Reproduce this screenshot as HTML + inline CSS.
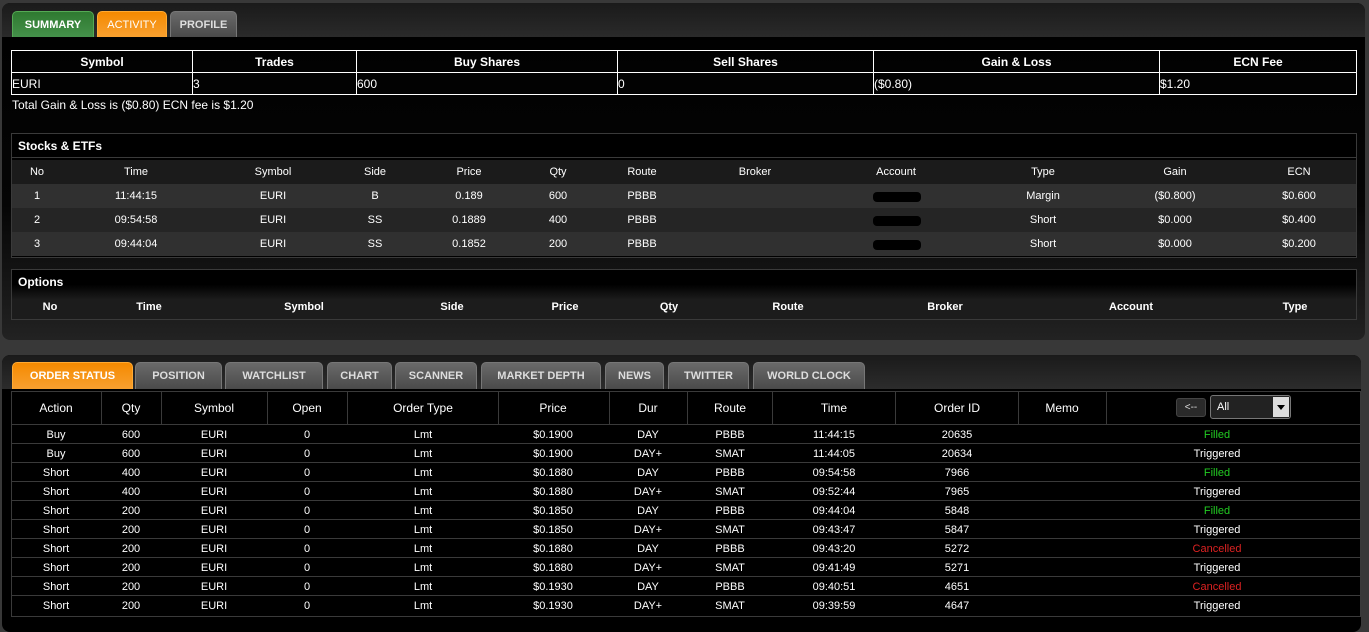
<!DOCTYPE html>
<html><head><meta charset="utf-8"><style>
*{margin:0;padding:0;box-sizing:border-box}
body{width:1369px;height:632px;background:#383838;font-family:"Liberation Sans",sans-serif;color:#fff;position:relative;overflow:hidden;font-size:11px}
.abs{position:absolute}
.panel{position:absolute;border-radius:8px;background:linear-gradient(#000 0,#050505 60%,#222 100%)}
.tab{position:absolute;height:26px;border-radius:5px 5px 0 0;font-weight:bold;font-size:11px;display:flex;align-items:center;justify-content:center;color:#ddd;background:linear-gradient(#6a6a6a,#4a4a4a);border:1px solid #777;border-bottom:none}
.tab.on{background:linear-gradient(#f58a00,#f8a030);color:#fff;border-color:#fa3}
.tab.g{background:linear-gradient(#2f7a30,#44904a);color:#fff;border-color:#5a5}
.c{position:absolute;transform:translateX(-50%);white-space:nowrap}
table{border-collapse:collapse}
</style></head><body>
<div class="panel" style="left:2px;top:3px;width:1363px;height:337px"></div>
<div class="abs" style="left:2px;top:3px;width:1363px;height:34px;border-radius:8px 8px 0 0;background:linear-gradient(#1a1a1a,#2a2a2a)"></div>
<div class="tab g" style="left:12px;top:11px;width:82px">SUMMARY</div>
<div class="tab on" style="left:97px;top:11px;width:70px;font-weight:normal">ACTIVITY</div>
<div class="tab" style="left:170px;top:11px;width:67px">PROFILE</div>
<div class="abs" style="left:2px;top:37px;width:1363px;height:3px;background:#000"></div>

<table class="abs" style="left:11px;top:50px;width:1346px;font-size:12px">
<tr style="height:22px;font-weight:bold"><td style="border:1px solid #fff;width:181px;text-align:center">Symbol</td><td style="border:1px solid #fff;width:164px;text-align:center">Trades</td><td style="border:1px solid #fff;width:261px;text-align:center">Buy Shares</td><td style="border:1px solid #fff;width:256px;text-align:center">Sell Shares</td><td style="border:1px solid #fff;width:286px;text-align:center">Gain &amp; Loss</td><td style="border:1px solid #fff;text-align:center">ECN Fee</td></tr>
<tr style="height:22px"><td style="border:1px solid #fff">EURI</td><td style="border:1px solid #fff">3</td><td style="border:1px solid #fff">600</td><td style="border:1px solid #fff">0</td><td style="border:1px solid #fff">($0.80)</td><td style="border:1px solid #fff">$1.20</td></tr>
</table>
<div class="abs" style="left:12px;top:98px;font-size:12px">Total Gain &amp; Loss is ($0.80) ECN fee is $1.20</div>

<div class="abs" style="left:11px;top:133px;width:1346px;height:125px;border:1px solid #3a3a3a;background:#000"></div>
<div class="abs" style="left:18px;top:139px;font-weight:bold;font-size:12px">Stocks &amp; ETFs</div>
<div class="abs" style="left:12px;top:157px;width:1344px;height:1px;background:#3a3a3a"></div>
<div class="abs" style="left:12px;top:160px;width:1344px;height:24px;background:#1b1b1b"></div>
<div class="abs" style="left:12px;top:184px;width:1344px;height:24px;background:#303030"></div>
<div class="abs" style="left:12px;top:208px;width:1344px;height:24px;background:#252525"></div>
<div class="abs" style="left:12px;top:232px;width:1344px;height:24px;background:#303030"></div>
<div id="st"></div>

<div class="abs" style="left:11px;top:269px;width:1346px;height:51px;border:1px solid #3a3a3a;background:linear-gradient(#000 0,#000 30%,#1c1c1c 60%,#1c1c1c)"></div>
<div class="abs" style="left:18px;top:275px;font-weight:bold;font-size:12px">Options</div>
<div id="op"></div>

<div class="panel" style="left:2px;top:355px;width:1359px;height:277px;background:#000"></div>
<div class="abs" style="left:2px;top:355px;width:1359px;height:34px;border-radius:8px 8px 0 0;background:linear-gradient(#1a1a1a,#2c2c2c)"></div>
<div class="tab on" style="left:12px;top:362px;width:121px;height:27px">ORDER STATUS</div>
<div class="tab" style="left:135px;top:362px;width:87px;height:27px">POSITION</div>
<div class="tab" style="left:225px;top:362px;width:98px;height:27px">WATCHLIST</div>
<div class="tab" style="left:327px;top:362px;width:65px;height:27px">CHART</div>
<div class="tab" style="left:395px;top:362px;width:82px;height:27px">SCANNER</div>
<div class="tab" style="left:481px;top:362px;width:120px;height:27px">MARKET DEPTH</div>
<div class="tab" style="left:605px;top:362px;width:59px;height:27px">NEWS</div>
<div class="tab" style="left:668px;top:362px;width:81px;height:27px">TWITTER</div>
<div class="tab" style="left:753px;top:362px;width:112px;height:27px">WORLD CLOCK</div>
<div class="abs" style="left:11px;top:391px;width:1350px;height:226px;border:1px solid #3a3a3a"></div>
<div id="ord"></div>
<div class="abs" style="left:1176px;top:398px;width:30px;height:19px;background:#2a2a2a;border:1px solid #444;border-radius:3px;color:#ddd;font-size:10px;text-align:center;line-height:17px">&lt;--</div>
<div class="abs" style="left:1210px;top:395px;width:81px;height:24px;background:#222;border:1px solid #777;border-radius:3px"><span style="position:absolute;left:6px;top:5px;font-size:11px">All</span><div style="position:absolute;right:1px;top:1px;width:16px;height:20px;background:#ddd"><div style="position:absolute;left:4px;top:8px;border:4px solid transparent;border-top:5px solid #000;border-bottom:none"></div></div></div>
<script>
function put(id,html){document.getElementById(id).innerHTML=html}
var h='';
var sx=[37,136,273,375,469,558,642,755,896,1043,1175,1299];
var sh=['No','Time','Symbol','Side','Price','Qty','Route','Broker','Account','Type','Gain','ECN'];
sh.forEach((t,i)=>h+='<div class="c" style="left:'+sx[i]+'px;top:166px">'+t+'</div>');
var rows=[['1','11:44:15','EURI','B','0.189','600','PBBB','','','Margin','($0.800)','$0.600'],['2','09:54:58','EURI','SS','0.1889','400','PBBB','','','Short','$0.000','$0.400'],['3','09:44:04','EURI','SS','0.1852','200','PBBB','','','Short','$0.000','$0.200']];
rows.forEach((r,j)=>{var y=190+24*j;r.forEach((t,i)=>{if(t)h+='<div class="c" style="left:'+sx[i]+'px;top:'+y+'px">'+t+'</div>'});h+='<div class="abs" style="left:873px;top:'+(y+2)+'px;width:48px;height:10px;background:#000;border-radius:4px"></div>'});
put('st',h);
h='';var ox=[50,149,304,452,565,669,788,945,1131,1295];
['No','Time','Symbol','Side','Price','Qty','Route','Broker','Account','Type'].forEach((t,i)=>h+='<div class="c" style="left:'+ox[i]+'px;top:301px;font-weight:bold">'+t+'</div>');
put('op',h);
h='';var bx=[101,161,267,347,498,609,687,772,895,1018,1106];
bx.forEach(x=>h+='<div class="abs" style="left:'+x+'px;top:392px;width:1px;height:33px;background:#3a3a3a"></div>');
var cx=[56,131,214,307,423,553,648,730,834,957,1062];
['Action','Qty','Symbol','Open','Order Type','Price','Dur','Route','Time','Order ID','Memo'].forEach((t,i)=>h+='<div class="c" style="left:'+cx[i]+'px;top:401px;font-size:12px">'+t+'</div>');
var od=[['Buy','600','$0.1900','DAY','PBBB','11:44:15','20635','Filled'],['Buy','600','$0.1900','DAY+','SMAT','11:44:05','20634','Triggered'],['Short','400','$0.1880','DAY','PBBB','09:54:58','7966','Filled'],['Short','400','$0.1880','DAY+','SMAT','09:52:44','7965','Triggered'],['Short','200','$0.1850','DAY','PBBB','09:44:04','5848','Filled'],['Short','200','$0.1850','DAY+','SMAT','09:43:47','5847','Triggered'],['Short','200','$0.1880','DAY','PBBB','09:43:20','5272','Cancelled'],['Short','200','$0.1880','DAY+','SMAT','09:41:49','5271','Triggered'],['Short','200','$0.1930','DAY','PBBB','09:40:51','4651','Cancelled'],['Short','200','$0.1930','DAY+','SMAT','09:39:59','4647','Triggered']];
od.forEach((r,j)=>{var y=425+19*j;h+='<div class="abs" style="left:12px;top:'+(y-1)+'px;width:1348px;height:1px;background:#3a3a3a"></div>';
var v=[r[0],r[1],'EURI','0','Lmt',r[2],r[3],r[4],r[5],r[6]];v.forEach((t,i)=>h+='<div class="c" style="left:'+cx[i]+'px;top:'+(y+4)+'px">'+t+'</div>');
var col=r[7]=='Filled'?'#2c2':r[7]=='Cancelled'?'#d22':'#fff';h+='<div class="c" style="left:1217px;top:'+(y+4)+'px;color:'+col+'">'+r[7]+'</div>'});
put('ord',h);
</script>
</body></html>
